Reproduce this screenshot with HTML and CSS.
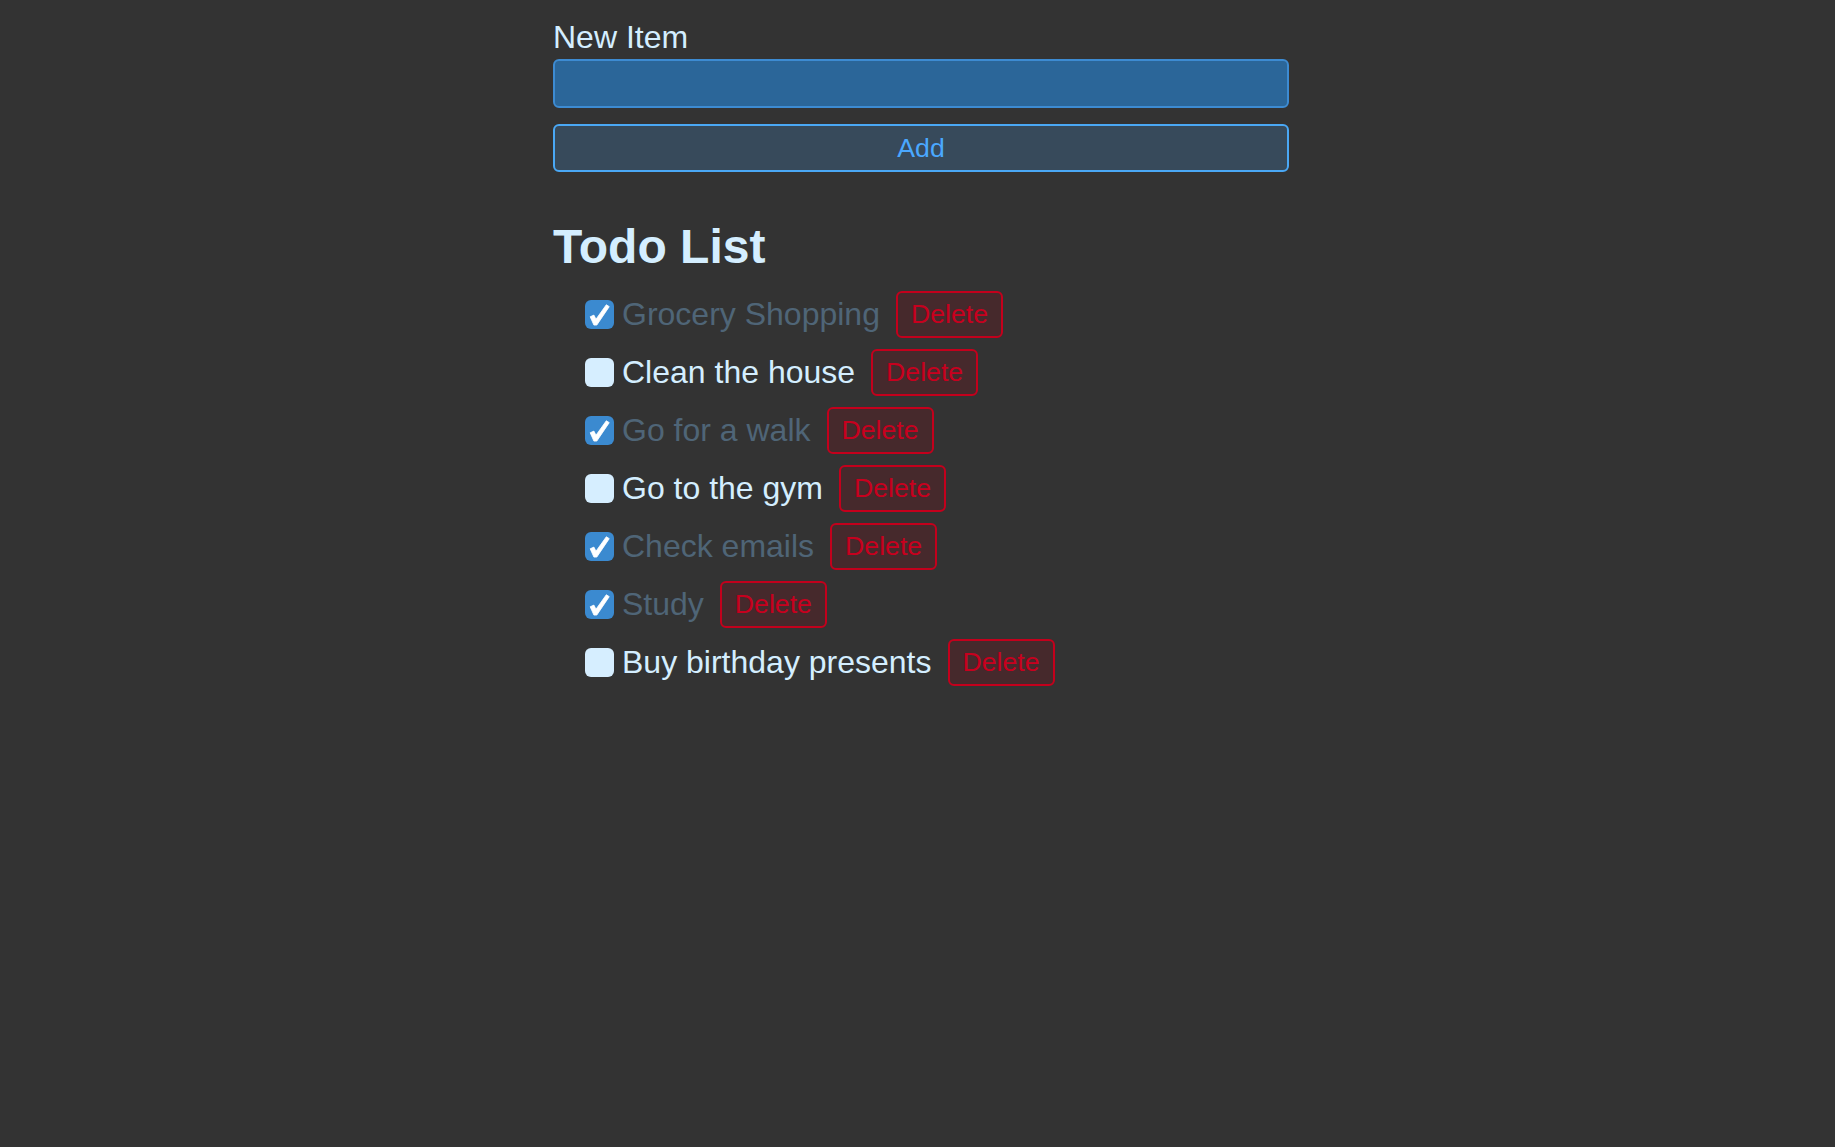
FILE: index.html
```html
<!DOCTYPE html>
<html lang="en">
<head>
<meta charset="utf-8">
<title>Todo List</title>
<link rel="stylesheet" href="styles.css">
</head>
<body>
<div class="app">
  <form class="new-form">
    <label class="label" for="new-item">New Item</label>
    <input class="input" id="new-item" type="text">
    <button class="add" type="button">Add</button>
  </form>
  <h2 class="title">Todo List</h2>
  <ul class="list">
    <li class="item done">
      <span class="box"><svg viewBox="0 0 28 28"><path d="M5 16.2 L8.6 14.6 L10.6 18.6 L20.6 4.6 L23.4 6.4 L11.4 24.2 L8.6 24.2 Z"/></svg></span>
      <span class="text">Grocery Shopping</span>
      <button class="del" type="button">Delete</button>
    </li>
    <li class="item">
      <span class="box"></span>
      <span class="text">Clean the house</span>
      <button class="del" type="button">Delete</button>
    </li>
    <li class="item done">
      <span class="box"><svg viewBox="0 0 28 28"><path d="M5 16.2 L8.6 14.6 L10.6 18.6 L20.6 4.6 L23.4 6.4 L11.4 24.2 L8.6 24.2 Z"/></svg></span>
      <span class="text">Go for a walk</span>
      <button class="del" type="button">Delete</button>
    </li>
    <li class="item">
      <span class="box"></span>
      <span class="text">Go to the gym</span>
      <button class="del" type="button">Delete</button>
    </li>
    <li class="item done">
      <span class="box"><svg viewBox="0 0 28 28"><path d="M5 16.2 L8.6 14.6 L10.6 18.6 L20.6 4.6 L23.4 6.4 L11.4 24.2 L8.6 24.2 Z"/></svg></span>
      <span class="text">Check emails</span>
      <button class="del" type="button">Delete</button>
    </li>
    <li class="item done">
      <span class="box"><svg viewBox="0 0 28 28"><path d="M5 16.2 L8.6 14.6 L10.6 18.6 L20.6 4.6 L23.4 6.4 L11.4 24.2 L8.6 24.2 Z"/></svg></span>
      <span class="text">Study</span>
      <button class="del" type="button">Delete</button>
    </li>
    <li class="item">
      <span class="box"></span>
      <span class="text">Buy birthday presents</span>
      <button class="del" type="button">Delete</button>
    </li>
  </ul>
</div>
</body>
</html>
```
FILE: styles.css
```css
html, body {
  margin: 0;
  background: #333333;
}
body {
  padding-left: 7px;
  font-family: "Liberation Sans", Arial, sans-serif;
  color: #d4eeff;
}
.app {
  width: 736px;
  margin: 0 auto;
  padding-top: 19px;
}
.new-form {
  display: flex;
  flex-direction: column;
}
.label {
  font-size: 32px;
  line-height: 37px;
  margin-bottom: 3px;
}
.input {
  box-sizing: border-box;
  width: 100%;
  height: 49px;
  margin: 0 0 16px;
  border: 2px solid #3d8bd2;
  border-radius: 6px;
  background: #2b6699;
  color: #d4eeff;
  font: 32px "Liberation Sans", Arial, sans-serif;
  padding: 0 8px;
}
.add {
  box-sizing: border-box;
  width: 100%;
  height: 48px;
  border: 2px solid #4aa8f5;
  border-radius: 6px;
  background: #374a5b;
  color: #4aa8ff;
  font: 26.67px "Liberation Sans", Arial, sans-serif;
  padding: 0;
}
.title {
  margin: 47px 0 16px;
  font-size: 48px;
  line-height: 56px;
  font-weight: bold;
  color: #d4eeff;
}
.list {
  list-style: none;
  margin: 0;
  padding: 0 0 0 32px;
  display: flex;
  flex-direction: column;
  gap: 11px;
}
.item {
  display: flex;
  align-items: center;
  height: 47px;
}
.box {
  box-sizing: border-box;
  width: 29px;
  height: 29px;
  border-radius: 6px;
  background: #d6eeff;
  margin-right: 8px;
  flex: none;
  display: flex;
}
.box svg {
  width: 29px;
  height: 29px;
}
.box path {
  fill: #ffffff;
  stroke: #ffffff;
  stroke-width: 0.8;
  stroke-linejoin: round;
}
.done .box {
  background: #3b8ad0;
}
.text {
  font-size: 32px;
  line-height: 37px;
  color: #d4eeff;
  white-space: nowrap;
}
.done .text {
  color: #4f6577;
}
.del {
  box-sizing: border-box;
  height: 47px;
  margin-left: 16px;
  padding: 0 13px;
  border: 2px solid #c4001c;
  border-radius: 6px;
  background: #46292c;
  color: #c8001e;
  font: 26.67px "Liberation Sans", Arial, sans-serif;
}
```
